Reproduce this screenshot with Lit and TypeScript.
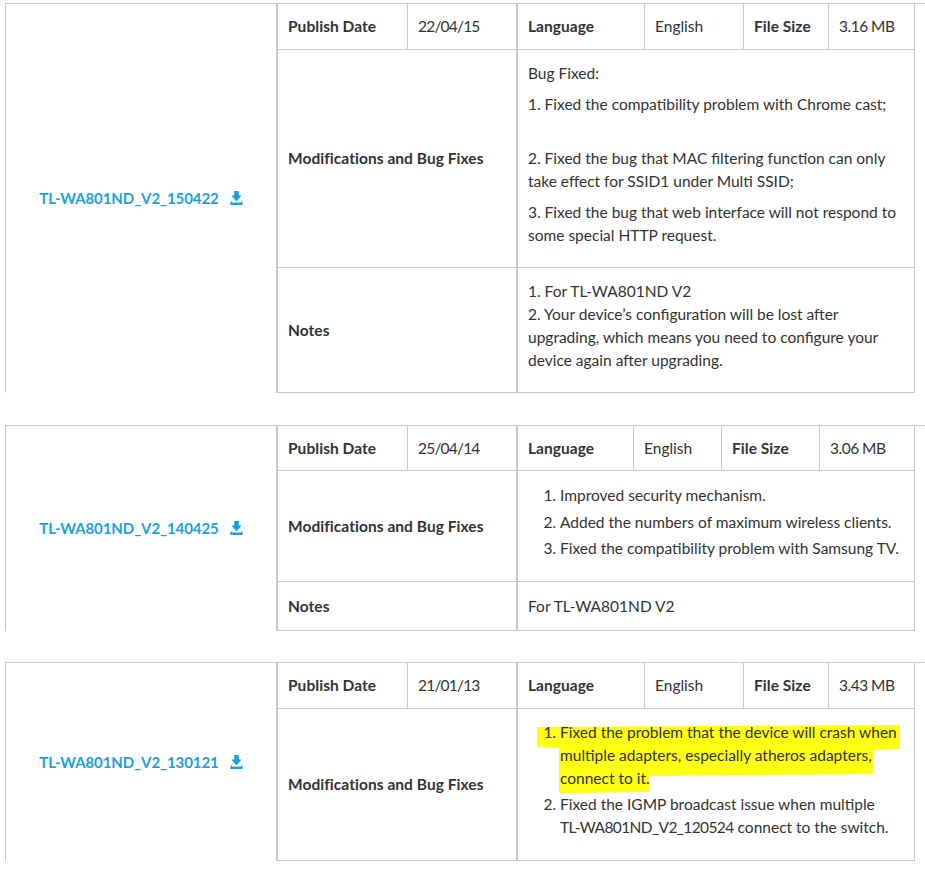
import { LitElement, html, css, svg } from "lit";
import { customElement } from "lit/decorators.js";

interface Block {
  name: string; date: string; size: string;
  cols: number[]; rows: number[];
  mods: unknown; notes?: unknown;
}

const BLOCKS: Block[] = [
  {
    name: "TL-WA801ND_V2_150422", date: "22/04/15", size: "3.16 MB",
    cols: [130, 110, 127, 99, 85, 86], rows: [46, 218, 125],
    mods: html`<p>Bug Fixed:</p><p>1. Fixed the compatibility problem with Chrome cast;<br /><br /></p>
      <p>2. Fixed the bug that MAC filtering function can only take effect for SSID1 under Multi SSID;</p>
      <p>3. Fixed the bug that web interface will not respond to some special HTTP request.</p>`,
    notes: html`<p>1. For TL-WA801ND V2<br />2. Your device’s configuration will be lost after upgrading, which means you need to configure your device again after upgrading.</p>`,
  },
  {
    name: "TL-WA801ND_V2_140425", date: "25/04/14", size: "3.06 MB",
    cols: [130, 110, 116, 88, 98, 95], rows: [45, 111, 49],
    mods: html`<ol class="loose"><li>Improved security mechanism.</li><li>Added the numbers of maximum wireless clients.</li><li>Fixed the compatibility problem with Samsung TV.</li></ol>`,
    notes: html`<p class="flush">For TL-WA801ND V2</p>`,
  },
  {
    name: "TL-WA801ND_V2_130121", date: "21/01/13", size: "3.43 MB",
    cols: [130, 110, 127, 99, 85, 86], rows: [46, 152],
    mods: html`<div class="marked">
      <svg class="marker" viewBox="0 0 397 90" aria-hidden="true">${svg`<polygon fill="#ffff14" points="19,16 382,14 382,38 355,39 355,63 131,65 131,81 41,82 41,37 19,36" />`}</svg>
      <ol><li>Fixed the problem that the device will crash when multiple adapters, especially atheros adapters, connect to it.</li><li>Fixed the IGMP broadcast issue when multiple <span class="nb">TL-WA801ND_V2_120524</span> connect to the switch.</li></ol></div>`,
  },
];

@customElement("app-root")
export class AppRoot extends LitElement {
  static styles = css`
    :host { display: block; font-family: Lato, "Open Sans", sans-serif; font-size: 15.5px; line-height: 23px; color: #333; background: #fff; min-height: 874px; }
    .page { display: flex; flex-direction: column; gap: 31px; padding: 3px 0 0 5px; }
    .block { display: flex; border-top: 1px solid #c9c9c9; border-left: 1px solid #c9c9c9; }
    .block:first-child { margin-bottom: 1px; }
    .file { width: 270px; display: flex; align-items: center; justify-content: center; gap: 11px; color: #1ba1de; font-weight: 700; font-size: 15px; letter-spacing: -0.08px; }
    .file svg { width: 13px; height: 14px; margin-top: -1px; }
    .grid { display: grid; border-left: 2px solid #c9c9c9; }
    .c { display: flex; align-items: center; padding: 0 10px; border-right: 1px solid #c9c9c9; border-bottom: 1px solid #c9c9c9; min-width: 0; }
    .b { font-weight: 700; letter-spacing: 0.05px; }
    .date { letter-spacing: -0.8px; border-right-width: 2px; }
    .size { letter-spacing: -0.5px; }
    .label { grid-column: span 2; border-right-width: 2px; }
    .body { grid-column: span 4; }
    .body > div { width: 100%; }
    p { margin: 0 0 8px; }
    p.flush { margin: 0; }
    ol { margin: 0 0 8px; padding: 0 0 0 32px; }
    li { margin-bottom: 3px; }
    ol.loose li { margin-bottom: 3.5px; }
    .nb { white-space: nowrap; letter-spacing: -0.6px; }
    .marked { position: relative; margin-bottom: 10px; }
    .marker { position: absolute; left: -10px; top: -10px; width: 397px; height: 90px; }
    .marked ol { position: relative; }
  `;

  private icon() {
    return html`<svg viewBox="0 0 14 14" preserveAspectRatio="none" aria-hidden="true"><path fill="currentColor" d="M4.5 0h5v4.5h3L7 10.5 1.5 4.5h3zM0.5 10.5h1.5v1h10v-1h1.5V14H0.5z" /></svg>`;
  }

  render() {
    return html`<div class="page">
      ${BLOCKS.map((b) => html`<section class="block">
        <div class="file"><span>${b.name}</span>${this.icon()}</div>
        <div class="grid" style="grid-template-columns:${b.cols.map((c) => c + "px").join(" ")};grid-template-rows:${b.rows.map((r) => r + "px").join(" ")};width:${b.cols.reduce((x, y) => x + y, 0)}px">
          <div class="c b">Publish Date</div><div class="c date">${b.date}</div>
          <div class="c b">Language</div><div class="c">English</div>
          <div class="c b">File Size</div><div class="c size">${b.size}</div>
          <div class="c b label">Modifications and Bug Fixes</div>
          <div class="c body"><div>${b.mods}</div></div>
          ${b.notes ? html`<div class="c b label">Notes</div><div class="c body"><div>${b.notes}</div></div>` : ""}
        </div>
      </section>`)}
    </div>`;
  }
}
